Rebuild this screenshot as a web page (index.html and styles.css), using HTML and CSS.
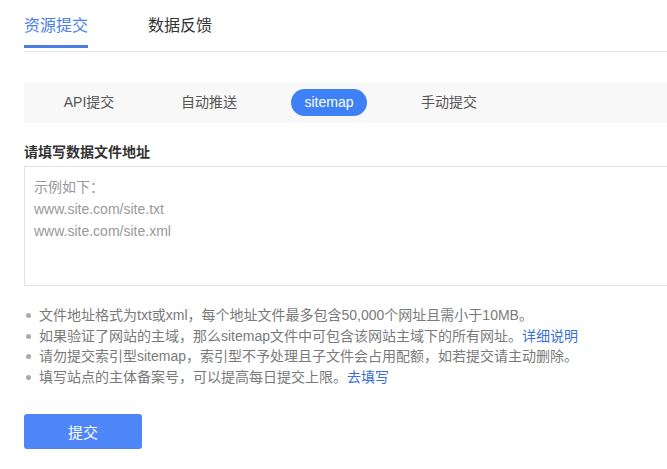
FILE: index.html
```html
<!DOCTYPE html>
<html lang="zh-CN">
<head>
<meta charset="utf-8">
<title>资源提交</title>
<link rel="stylesheet" href="styles.css">
</head>
<body>
<div class="page">
  <nav class="tabs">
    <a class="tab active">资源提交</a>
    <a class="tab">数据反馈</a>
  </nav>
  <div class="subtabs">
    <span class="subtab"><span class="label">API提交</span></span>
    <span class="subtab"><span class="label">自动推送</span></span>
    <span class="subtab"><span class="label pill">sitemap</span></span>
    <span class="subtab"><span class="label">手动提交</span></span>
  </div>
  <h3 class="field-title">请填写数据文件地址</h3>
  <div class="textarea"><div class="placeholder">示例如下：<br>www.site.com/site.txt<br>www.site.com/site.xml</div></div>
  <ul class="notes">
    <li>文件地址格式为txt或xml，每个地址文件最多包含50,000个网址且需小于10MB。</li>
    <li>如果验证了网站的主域，那么sitemap文件中可包含该网站主域下的所有网址。<a class="link">详细说明</a></li>
    <li>请勿提交索引型sitemap，索引型不予处理且子文件会占用配额，如若提交请主动删除。</li>
    <li>填写站点的主体备案号，可以提高每日提交上限。<a class="link">去填写</a></li>
  </ul>
  <button class="submit">提交</button>
</div>
</body>
</html>
```
FILE: styles.css
```css
html, body {
  margin: 0;
  padding: 0;
  background: #fff;
}
body {
  font-family: "Liberation Sans", "Noto Sans CJK SC", sans-serif;
  color: #333;
  overflow: hidden;
}
.page {
  padding-left: 24px;
}
.tabs {
  display: flex;
  gap: 60px;
  border-bottom: 1px solid #e8e8e8;
  height: 51px;
}
.tab {
  font-size: 16px;
  line-height: 20px;
  padding-top: 16px;
  height: 32px;
  color: #333;
  border-bottom: 3px solid transparent;
  box-sizing: content-box;
}
.tab.active {
  color: #4a7ee6;
  border-bottom-color: #4a7ee6;
  height: 29px;
  padding-top: 16px;
}
.subtabs {
  margin-top: 30px;
  height: 41px;
  background: #f8f8f8;
  display: flex;
  align-items: center;
  padding-left: 5px;
}
.subtab {
  width: 120px;
  display: flex;
  justify-content: center;
}
.label {
  font-size: 14px;
  color: #555;
  line-height: 27px;
}
.pill {
  width: 76px;
  height: 27px;
  border-radius: 14px;
  background: #3e80f6;
  color: #fff;
  text-align: center;
}
.field-title {
  margin: 19px 0 0;
  font-size: 14px;
  font-weight: bold;
  line-height: 20px;
  color: #333;
}
.textarea {
  margin-top: 4px;
  border: 1px solid #e3e3e3;
  border-right: none;
  padding: 9px 0 0 9px;
  box-sizing: border-box;
  height: 120px;
}
.placeholder {
  font-size: 14px;
  line-height: 22px;
  color: #999;
}
.notes {
  list-style: none;
  margin: 19px 0 0;
  padding: 0;
}
.notes li {
  position: relative;
  font-size: 14px;
  line-height: 20.5px;
  color: #7a7a7a;
  padding-left: 15px;
}
.notes li::before {
  content: "";
  position: absolute;
  left: 2px;
  top: 8px;
  width: 5px;
  height: 5px;
  border-radius: 50%;
  background: #aaa;
}
.link {
  color: #3a6fd8;
}
.submit {
  margin-top: 27px;
  width: 118px;
  height: 35px;
  border: none;
  border-radius: 3px;
  background: #4e86f8;
  color: #fff;
  font-family: "Liberation Sans", "Noto Sans CJK SC", sans-serif;
  font-size: 15px;
  display: block;
}
```
